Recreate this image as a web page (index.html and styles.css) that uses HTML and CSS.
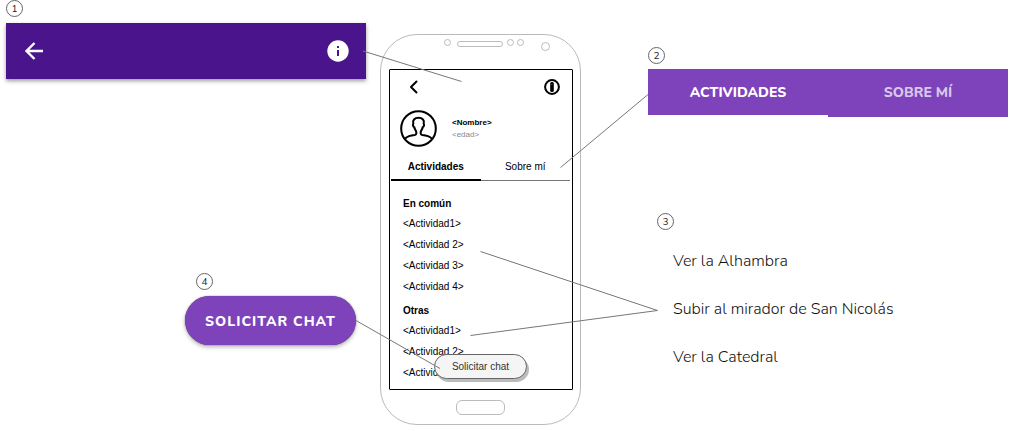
FILE: index.html
```html
<!DOCTYPE html>
<html lang="es">
<head>
<meta charset="utf-8">
<meta name="viewport" content="width=device-width, initial-scale=1">
<title>Perfil de usuario</title>
<link rel="stylesheet" href="styles.css">
</head>
<body>
<main class="board">
  <section class="left">
    <span class="badge">1</span>
    <header class="appbar">
      <button class="icon-button" aria-label="Volver">
        <svg width="24" height="24" viewBox="0 0 24 24" fill="none" stroke="#fff" stroke-width="2.4" stroke-linejoin="miter"><path d="M21 12H5M12.500 4 4.500 12l8 8"/></svg>
      </button>
      <button class="icon-button" aria-label="Información">
        <svg width="24" height="24" viewBox="0 0 24 24"><circle cx="12" cy="12" r="10.700" fill="#fff"/><path d="M11 7h2v2h-2zM11 11h2v6h-2z" fill="#4a148c"/></svg>
      </button>
    </header>
    <div class="chat">
      <span class="badge">4</span>
      <button class="chat-button">SOLICITAR CHAT</button>
    </div>
  </section>

  <section class="phone">
    <div class="sensors">
      <i class="dot"></i><i class="speaker"></i><i class="dot"></i><i class="dot"></i><i class="camera"></i>
    </div>
    <div class="screen">
      <div class="screen-bar">
        <button class="icon-button" aria-label="Atrás">
          <svg width="16" height="16" viewBox="0 0 16 16" fill="none" stroke="#000" stroke-width="2" stroke-linecap="round" stroke-linejoin="round"><path d="M10.500 2.500 5 8l5.500 5.500"/></svg>
        </button>
        <button class="icon-button" aria-label="Más información">
          <svg width="16" height="16" viewBox="0 0 16 16"><circle cx="8" cy="8" r="6.900" fill="none" stroke="#000" stroke-width="2"/><rect x="6.200" y="3" width="3.600" height="10" rx="1.500"/><path d="M7 5.500h1.500" stroke="#777" stroke-width=".6"/></svg>
        </button>
      </div>
      <div class="profile">
        <svg width="37" height="37" viewBox="0 0 38 38" fill="none" stroke="#000" stroke-width="2.100" stroke-linecap="round" stroke-linejoin="round"><circle cx="19" cy="19" r="17.800"/><path d="M5 29.500C8 26.800 11.500 26 15 25.700c1.500-.2 2-1.200 1.700-3.200-.2-1.500-1.700-2.700-2-4.800-1.300-.5-1.900-2.500-1-3.500C12.500 10.500 15 8 19 8s6.500 2.500 5.300 6.200c.9 1 .3 3-1 3.500-.3 2.100-1.800 3.300-2 4.800-.3 2 .2 3 1.700 3.200 3.500.3 7 1.100 10 3.800"/></svg>
        <div>
          <p class="name">&lt;Nombre&gt;</p>
          <p class="age">&lt;edad&gt;</p>
        </div>
      </div>
      <div class="sketch-tabs" role="tablist">
        <button role="tab" aria-selected="true">Actividades</button>
        <button role="tab" aria-selected="false">Sobre mí</button>
      </div>
      <div class="activities">
        <h2>En común</h2>
        <ul>
          <li>&lt;Actividad1&gt;</li>
          <li>&lt;Actividad 2&gt;</li>
          <li>&lt;Actividad 3&gt;</li>
          <li>&lt;Actividad 4&gt;</li>
        </ul>
        <h2>Otras</h2>
        <ul>
          <li>&lt;Actividad1&gt;</li>
          <li>&lt;Actividad 2&gt;</li>
          <li>&lt;Actividad 3&gt;</li>
        </ul>
      </div>
      <button class="sketch-chat">Solicitar chat</button>
    </div>
    <div class="home"></div>
  </section>

  <section class="right">
    <span class="badge">2</span>
    <div class="tabs" role="tablist">
      <button role="tab" aria-selected="true">ACTIVIDADES</button>
      <button role="tab" aria-selected="false">SOBRE MÍ</button>
    </div>
    <div class="examples">
      <span class="badge">3</span>
      <ul>
        <li>Ver la Alhambra</li>
        <li>Subir al mirador de San Nicolás</li>
        <li>Ver la Catedral</li>
      </ul>
    </div>
  </section>

  <svg class="connectors" viewBox="0 0 1018 431" preserveAspectRatio="none" aria-hidden="true">
    <path d="M363 51 461.500 81.500M648 94.500 560.500 167.500M480.500 251.500 657.500 310.500 470.500 335.500M356 320.500 440 368.500"/>
  </svg>
</main>
</body>
</html>
```

FILE: styles.css
```css
* { box-sizing: border-box; }

body {
  margin: 0;
  background: #fff;
  color: #000;
  font-family: "Liberation Sans", Arial, sans-serif;
}

ul, p, h2 { margin: 0; padding: 0; }
ul { list-style: none; }

button {
  border: 0;
  padding: 0;
  background: none;
  color: inherit;
  font: inherit;
}

svg { display: block; }

.board {
  position: relative;
  display: grid;
  grid-template-columns: minmax(0, 374fr) 201px minmax(0, 427fr);
  padding: 0 10px 6px 6px;
}

.left { padding-right: 14px; }
.right { padding: 47px 0 0 67px; }

.badge {
  display: flex;
  align-items: center;
  justify-content: center;
  width: 17px;
  height: 17px;
  padding-top: 1px;
  border: 1px solid #666;
  border-radius: 50%;
  color: #222;
  font: 10px/14px Nunito, "Open Sans", sans-serif;
}

.appbar {
  display: flex;
  align-items: center;
  justify-content: space-between;
  height: 56px;
  margin-top: 6px;
  padding: 0 16px;
  background: #4a148c;
  box-shadow: 0 2px 4px rgba(0, 0, 0, .4);
}

.chat {
  width: 171px;
  margin: 194px 10px 0 auto;
}

.chat .badge { margin-left: 11px; }

.chat-button {
  width: 100%;
  height: 49px;
  margin-top: 6px;
  padding-top: 2px;
  border-radius: 25px;
  background: #7e43bb;
  box-shadow: 0 2px 4px rgba(0, 0, 0, .3), 0 0 1px #444;
  color: #fff;
  font: 800 14px/20px Nunito, "Open Sans", sans-serif;
  letter-spacing: 1px;
}

.phone {
  margin-top: 34px;
  padding: 4px 7px 9px 8px;
  border: 1px solid #bbb;
  border-radius: 37px;
}

.sensors {
  display: flex;
  align-items: flex-start;
  height: 30px;
  padding-left: 55px;
}

.dot, .speaker, .camera { border: 1px solid #bbb; }
.dot { width: 7px; height: 7px; border-radius: 50%; }
.dot + .dot { margin-left: 3px; }
.speaker { width: 46px; height: 6px; margin: 2px 4px 0 6px; border-radius: 3px; }
.camera { width: 9px; height: 9px; margin: 3px 0 0 17px; border-radius: 50%; }

.screen {
  position: relative;
  border: 1px solid #000;
  border-radius: 1px;
  padding-bottom: 6px;
}

.screen-bar {
  display: flex;
  justify-content: space-between;
  padding: 9px 12px 0 16px;
}

.profile {
  display: flex;
  align-items: center;
  gap: 15px;
  padding: 15px 10px 0;
}

.profile p { font-size: 8px; line-height: 12px; }
.profile .name { font-weight: bold; }
.profile .age { color: #888; }

.sketch-tabs {
  display: flex;
  margin: 8px 2px 0 1px;
  font-size: 10px;
}

.sketch-tabs button {
  flex: 1;
  height: 26px;
  padding-bottom: 2px;
  border-bottom: 1px solid #777;
}

.sketch-tabs [aria-selected="true"] {
  border-bottom: 2px solid #000;
  font-weight: bold;
}

.activities {
  padding: 13px 13px 0;
  font-size: 10px;
}

.activities h2 { font-size: 10px; line-height: 20px; }
.activities ul { margin-top: -1px; }
.activities li { line-height: 21px; }
.activities ul + h2 { margin-top: 4px; }

.sketch-chat {
  position: absolute;
  right: 45px;
  bottom: 10px;
  width: 93px;
  height: 25px;
  border: 1px solid #666;
  border-radius: 13px;
  background: #f5f5f5;
  box-shadow: 2px 3px 0 #bbb;
  color: #333;
  font-size: 10px;
}

.home {
  width: 49px;
  height: 15px;
  margin: 10px auto 0 67px;
  border: 1px solid #bbb;
  border-radius: 6px;
}

.tabs {
  display: flex;
  margin-top: 5px;
  background: #7e43bb;
  font: 800 14px/20px Nunito, "Open Sans", sans-serif;
}

.tabs button {
  flex: 1;
  height: 48px;
  padding-top: 1px;
  border-bottom: 2px solid transparent;
  color: #d9c7eb;
}

.tabs [aria-selected="true"] {
  border-color: #fff;
  color: #fff;
}

.examples { padding: 96px 9px 0; }

.examples ul {
  padding: 7px 16px 0;
  color: #111;
  font: 300 16px/48px Nunito, "Open Sans", sans-serif;
}

.connectors {
  position: absolute;
  inset: 0;
  width: 100%;
  height: 100%;
  fill: none;
  stroke: #777;
  pointer-events: none;
}

.connectors path { vector-effect: non-scaling-stroke; }
```
